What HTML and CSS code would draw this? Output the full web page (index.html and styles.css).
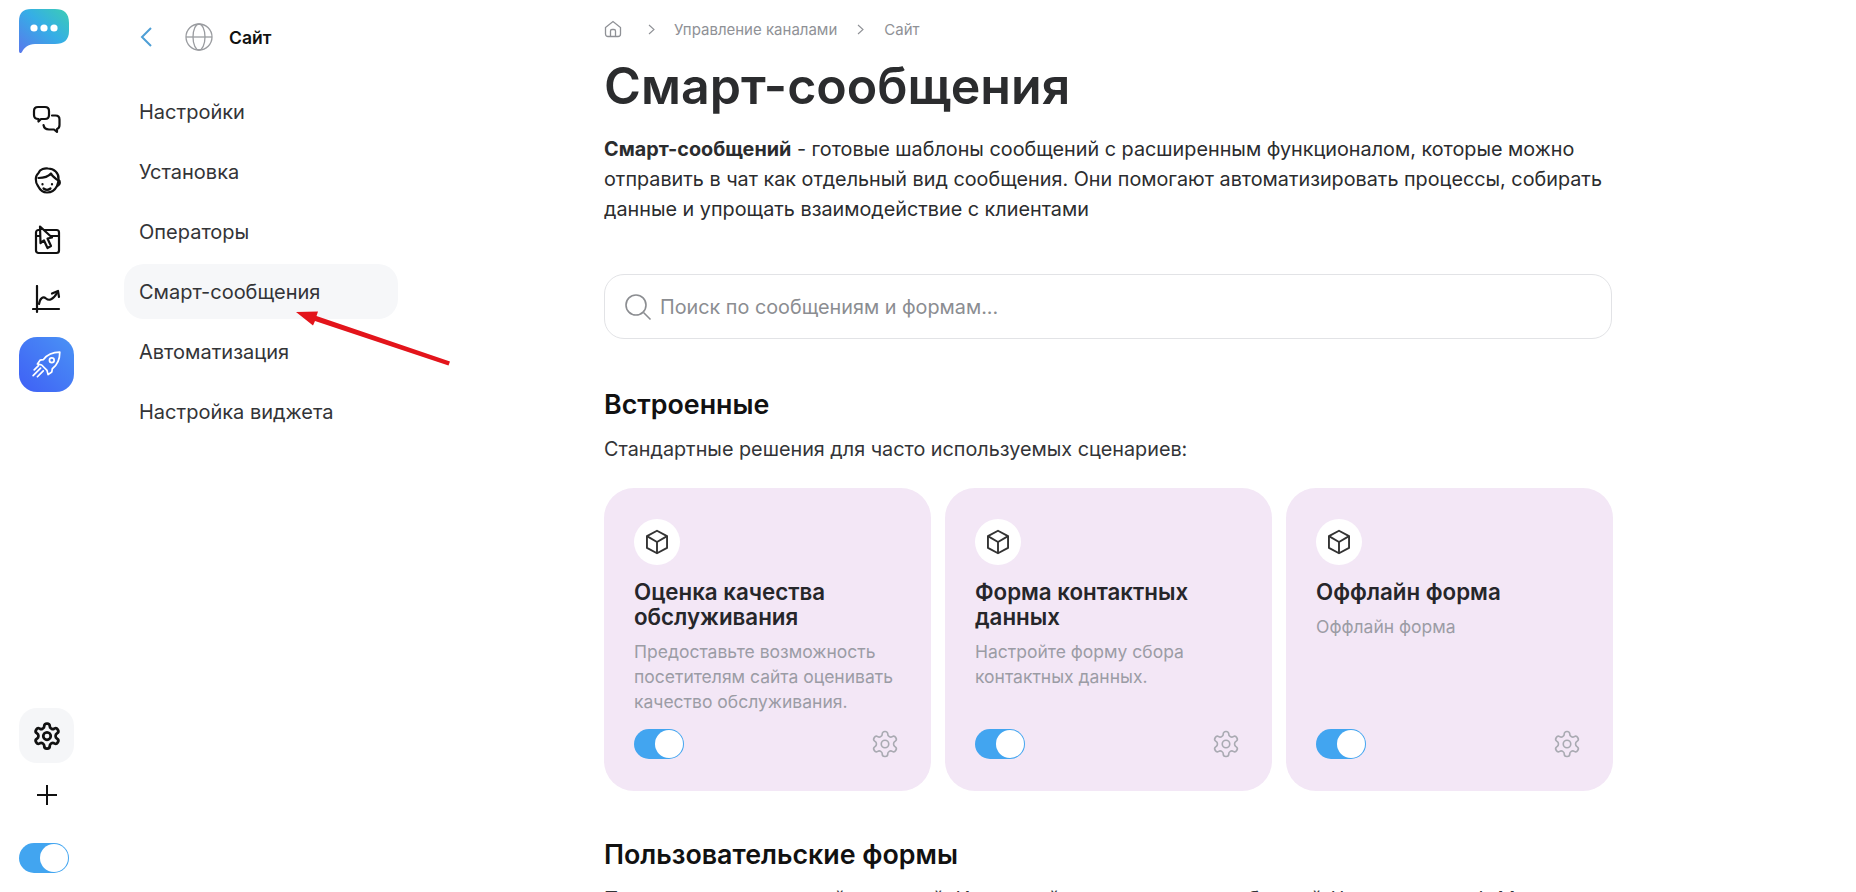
FILE: index.html
```html
<!DOCTYPE html>
<html lang="ru">
<head>
    <meta charset="UTF-8">
    <title>Смарт-сообщения</title>
    <link rel="stylesheet" href="styles.css">
</head>
<body>
    <div class="app">
        <!-- icon rail -->
        <aside class="rail">
            <svg class="logo" width="50" height="46" viewBox="0 0 50 46">
                <defs>
                    <linearGradient id="logoGrad" x1="0" y1="1" x2="1" y2="0">
                        <stop offset="0" stop-color="#5a78ec"/>
                        <stop offset="0.55" stop-color="#35aee6"/>
                        <stop offset="1" stop-color="#3ccdb4"/>
                    </linearGradient>
                </defs>
                <path d="M12 0H36C45 0 50 4 50 14V22C50 31 45 35 36 35H16C9 35 5 39 3 43C2 45 0 44 0 42V12C0 4 4 0 12 0Z" fill="url(#logoGrad)"/>
                <circle cx="15" cy="19" r="3.6" fill="#fff"/>
                <circle cx="25" cy="19" r="3.6" fill="#fff"/>
                <circle cx="35" cy="19" r="3.6" fill="#fff"/>
            </svg>
            <nav class="rail-icons">
                <div class="rail-item">
                    <svg width="30" height="30" viewBox="0 0 30 30" class="ico">
                        <path d="M6 2H13C15.500 2 17 3.500 17 6V10C17 12.500 15.500 14 13 14H9L6.500 16.500V14C3.500 14 2 12.500 2 10V6C2 3.500 3.500 2 6 2Z"/>
                        <path d="M20 10.500H23.500C26 10.500 27.500 12 27.500 14.500V20C27.500 22.500 26.500 23.500 25 24V27L22 24.500H17C14 24.500 12 23 11.500 20"/>
                    </svg>
                </div>
                <div class="rail-item">
                    <svg width="30" height="30" viewBox="0 0 30 30" class="ico">
                        <path d="M6 21C3 17 3 11 6.500 8C8 4 13 3 16 3.500C22 3.500 27 8 26.500 14C26.500 17 26 19 25 21C23 25 19 27.500 15 27.500C11 27.500 8 25 6 21Z"/>
                        <path d="M6.500 13C10 13 16 12 19 8.500C20 11 23 13 25.500 15"/>
                        <path d="M26.500 15C28.500 16 28.500 20 25.500 21"/>
                        <path d="M11.500 23.500C13.500 25 16.500 25 18.500 23.500"/>
                        <path d="M10.500 19V19.500M20 19V19.500"/>
                    </svg>
                </div>
                <div class="rail-item">
                    <svg width="30" height="30" viewBox="0 0 30 30" class="ico">
                        <rect x="4" y="5" width="23" height="23" rx="2.500"/>
                        <path d="M4 11H10M19 11H27"/>
                        <path d="M8 1.500L20 12.500L15.500 13.500L19 21L15.500 23L12 15.500L8.500 18Z" fill="#fff"/>
                    </svg>
                </div>
                <div class="rail-item">
                    <svg width="30" height="30" viewBox="0 0 30 30" class="ico">
                        <path d="M5 1V27M1 24H27"/>
                        <path d="M7 19C8 13 11 11 14 13.500C17 16 21 15 25 8"/>
                        <path d="M20 8.500L26 6L27 12"/>
                    </svg>
                </div>
                <div class="rail-item rail-active">
                    <svg width="32" height="32" viewBox="0 0 30 30" class="ico ico-white">
                        <path d="M27 3C20 3 15 5.500 11.500 10L8.500 10.500L6 14L10 15L15 20L16 24L19.500 21.500L20 18.500C24.500 15 27 10 27 3Z"/>
                        <circle cx="19.500" cy="10.500" r="2.200"/>
                        <path d="M9 18L2 25M11.500 20.500L6 26M7 15.500L3 19.500"/>
                    </svg>
                </div>
            </nav>
            <div class="rail-bottom">
                <div class="rail-item rail-settings">
                    <svg width="30" height="30" viewBox="0 0 24 24" class="ico">
                        <path d="M12.220 2h-.44a2 2 0 0 0-2 2v.18a2 2 0 0 1-1 1.730l-.43.25a2 2 0 0 1-2 0l-.15-.08a2 2 0 0 0-2.730.73l-.22.38a2 2 0 0 0 .73 2.730l.15.1a2 2 0 0 1 1 1.720v.51a2 2 0 0 1-1 1.740l-.15.09a2 2 0 0 0-.73 2.730l.22.38a2 2 0 0 0 2.730.73l.15-.08a2 2 0 0 1 2 0l.43.25a2 2 0 0 1 1 1.730V20a2 2 0 0 0 2 2h.44a2 2 0 0 0 2-2v-.18a2 2 0 0 1 1-1.730l.43-.25a2 2 0 0 1 2 0l.15.08a2 2 0 0 0 2.730-.73l.22-.39a2 2 0 0 0-.73-2.730l-.15-.08a2 2 0 0 1-1-1.740v-.5a2 2 0 0 1 1-1.740l.15-.09a2 2 0 0 0 .73-2.730l-.22-.38a2 2 0 0 0-2.730-.73l-.15.08a2 2 0 0 1-2 0l-.43-.25a2 2 0 0 1-1-1.730V4a2 2 0 0 0-2-2z"/>
                        <circle cx="12" cy="12" r="3"/>
                    </svg>
                </div>
                <svg class="plus" width="24" height="24" viewBox="0 0 24 24">
                    <path d="M12 2V22M2 12H22"/>
                </svg>
                <span class="toggle"><span class="knob"></span></span>
            </div>
        </aside>

        <!-- section menu -->
        <aside class="menu">
            <div class="menu-head">
                <svg class="back" width="14" height="22" viewBox="0 0 14 22">
                    <path d="M12 2L3 11L12 20"/>
                </svg>
                <svg class="globe" width="28" height="28" viewBox="0 0 28 28">
                    <circle cx="14" cy="14" r="13"/>
                    <ellipse cx="14" cy="14" rx="6" ry="13"/>
                    <path d="M1 14H27"/>
                </svg>
                <span class="menu-title">Сайт</span>
            </div>
            <ul class="menu-list">
                <li>Настройки</li>
                <li>Установка</li>
                <li>Операторы</li>
                <li class="menu-active">Смарт-сообщения</li>
                <li>Автоматизация</li>
                <li>Настройка виджета</li>
            </ul>
        </aside>

        <!-- content -->
        <main class="content">
            <div class="crumbs">
                <svg class="home" width="18" height="18" viewBox="0 0 18 18">
                    <path d="M1.500 7.500L9 1.500L16.500 7.500V14C16.500 15.500 15.500 16.500 14 16.500H4C2.500 16.500 1.500 15.500 1.500 14Z"/>
                    <path d="M6.500 16.500V11C6.500 10 7 9.500 8 9.500H10C11 9.500 11.500 10 11.500 11V16.500"/>
                </svg>
                <svg class="crumb-sep first" width="7" height="11" viewBox="0 0 7 11"><path d="M1 1L6 5.500L1 10"/></svg>
                <span>Управление каналами</span>
                <svg class="crumb-sep" width="7" height="11" viewBox="0 0 7 11"><path d="M1 1L6 5.500L1 10"/></svg>
                <span>Сайт</span>
            </div>
            <h1>Смарт-сообщения</h1>
            <p class="lead"><b>Смарт-сообщений</b> - готовые шаблоны сообщений с расширенным функционалом, которые можно отправить в чат как отдельный вид сообщения. Они помогают автоматизировать процессы, собирать данные и упрощать взаимодействие с клиентами</p>

            <div class="search">
                <svg width="28" height="28" viewBox="0 0 28 28">
                    <circle cx="12" cy="12" r="10"/>
                    <path d="M19.500 19.500L26.500 26.500"/>
                </svg>
                <span>Поиск по сообщениям и формам...</span>
            </div>

            <h2>Встроенные</h2>
            <p class="sub">Стандартные решения для часто используемых сценариев:</p>

            <div class="cards">
                <div class="card">
                    <span class="card-icon">
                        <svg width="26" height="26" viewBox="0 0 22 22">
                            <path d="M11 1.500L19.500 6V16L11 20.500L2.500 16V6Z"/>
                            <path d="M2.500 6L11 11L19.500 6M11 11V20.500"/>
                        </svg>
                    </span>
                    <h3>Оценка качества обслуживания</h3>
                    <p>Предоставьте возможность посетителям сайта оценивать качество обслуживания.</p>
                    <div class="card-foot">
                        <span class="toggle"><span class="knob"></span></span>
                        <svg class="gear" width="30" height="30" viewBox="0 0 24 24">
                            <path d="M12.220 2h-.44a2 2 0 0 0-2 2v.18a2 2 0 0 1-1 1.730l-.43.25a2 2 0 0 1-2 0l-.15-.08a2 2 0 0 0-2.730.73l-.22.38a2 2 0 0 0 .73 2.730l.15.1a2 2 0 0 1 1 1.720v.51a2 2 0 0 1-1 1.740l-.15.09a2 2 0 0 0-.73 2.730l.22.38a2 2 0 0 0 2.730.73l.15-.08a2 2 0 0 1 2 0l.43.25a2 2 0 0 1 1 1.730V20a2 2 0 0 0 2 2h.44a2 2 0 0 0 2-2v-.18a2 2 0 0 1 1-1.730l.43-.25a2 2 0 0 1 2 0l.15.08a2 2 0 0 0 2.730-.73l.22-.39a2 2 0 0 0-.73-2.730l-.15-.08a2 2 0 0 1-1-1.740v-.5a2 2 0 0 1 1-1.740l.15-.09a2 2 0 0 0 .73-2.730l-.22-.38a2 2 0 0 0-2.730-.73l-.15.08a2 2 0 0 1-2 0l-.43-.25a2 2 0 0 1-1-1.730V4a2 2 0 0 0-2-2z"/>
                            <circle cx="12" cy="12" r="3"/>
                        </svg>
                    </div>
                </div>
                <div class="card">
                    <span class="card-icon">
                        <svg width="26" height="26" viewBox="0 0 22 22">
                            <path d="M11 1.500L19.500 6V16L11 20.500L2.500 16V6Z"/>
                            <path d="M2.500 6L11 11L19.500 6M11 11V20.500"/>
                        </svg>
                    </span>
                    <h3>Форма контактных данных</h3>
                    <p>Настройте форму сбора контактных данных.</p>
                    <div class="card-foot">
                        <span class="toggle"><span class="knob"></span></span>
                        <svg class="gear" width="30" height="30" viewBox="0 0 24 24">
                            <path d="M12.220 2h-.44a2 2 0 0 0-2 2v.18a2 2 0 0 1-1 1.730l-.43.25a2 2 0 0 1-2 0l-.15-.08a2 2 0 0 0-2.730.73l-.22.38a2 2 0 0 0 .73 2.730l.15.1a2 2 0 0 1 1 1.720v.51a2 2 0 0 1-1 1.740l-.15.09a2 2 0 0 0-.73 2.730l.22.38a2 2 0 0 0 2.730.73l.15-.08a2 2 0 0 1 2 0l.43.25a2 2 0 0 1 1 1.730V20a2 2 0 0 0 2 2h.44a2 2 0 0 0 2-2v-.18a2 2 0 0 1 1-1.730l.43-.25a2 2 0 0 1 2 0l.15.08a2 2 0 0 0 2.730-.73l.22-.39a2 2 0 0 0-.73-2.730l-.15-.08a2 2 0 0 1-1-1.740v-.5a2 2 0 0 1 1-1.740l.15-.09a2 2 0 0 0 .73-2.730l-.22-.38a2 2 0 0 0-2.730-.73l-.15.08a2 2 0 0 1-2 0l-.43-.25a2 2 0 0 1-1-1.730V4a2 2 0 0 0-2-2z"/>
                            <circle cx="12" cy="12" r="3"/>
                        </svg>
                    </div>
                </div>
                <div class="card">
                    <span class="card-icon">
                        <svg width="26" height="26" viewBox="0 0 22 22">
                            <path d="M11 1.500L19.500 6V16L11 20.500L2.500 16V6Z"/>
                            <path d="M2.500 6L11 11L19.500 6M11 11V20.500"/>
                        </svg>
                    </span>
                    <h3>Оффлайн форма</h3>
                    <p>Оффлайн форма</p>
                    <div class="card-foot">
                        <span class="toggle"><span class="knob"></span></span>
                        <svg class="gear" width="30" height="30" viewBox="0 0 24 24">
                            <path d="M12.220 2h-.44a2 2 0 0 0-2 2v.18a2 2 0 0 1-1 1.730l-.43.25a2 2 0 0 1-2 0l-.15-.08a2 2 0 0 0-2.730.73l-.22.38a2 2 0 0 0 .73 2.730l.15.1a2 2 0 0 1 1 1.720v.51a2 2 0 0 1-1 1.740l-.15.09a2 2 0 0 0-.73 2.730l.22.38a2 2 0 0 0 2.730.73l.15-.08a2 2 0 0 1 2 0l.43.25a2 2 0 0 1 1 1.730V20a2 2 0 0 0 2 2h.44a2 2 0 0 0 2-2v-.18a2 2 0 0 1 1-1.730l.43-.25a2 2 0 0 1 2 0l.15.08a2 2 0 0 0 2.730-.73l.22-.39a2 2 0 0 0-.73-2.730l-.15-.08a2 2 0 0 1-1-1.740v-.5a2 2 0 0 1 1-1.740l.15-.09a2 2 0 0 0 .73-2.730l-.22-.38a2 2 0 0 0-2.730-.73l-.15.08a2 2 0 0 1-2 0l-.43-.25a2 2 0 0 1-1-1.730V4a2 2 0 0 0-2-2z"/>
                            <circle cx="12" cy="12" r="3"/>
                        </svg>
                    </div>
                </div>
            </div>

            <h2 class="forms-title">Пользовательские формы</h2>
            <p class="sub">Позволяют создать свой сценарий. Используйте конструктор сообщений (форм и кнопок). Можно</p>
        </main>
    </div>

    <!-- annotation arrow drawn on top of the screenshot -->
    <svg class="arrow" width="170" height="70" viewBox="0 0 170 70">
        <path d="M3 10L25 9.500L23.500 14L157 59.500L155.500 63.500L22 19L20 23.500Z"/>
    </svg>
</body>
</html>
```

FILE: styles.css
```css
html, body{
    margin: 0;
    height: 100%;
    overflow: hidden;
    background: #fff;
}
body{
    font-family: Inter, "Noto Sans", sans-serif;
    color: #2b2b2e;
    position: relative;
}
.app{
    display: flex;
    height: 892px;
}
.ico{
    fill: none;
    stroke: #111;
    stroke-width: 2.2;
    stroke-linecap: round;
    stroke-linejoin: round;
}
.ico-white{
    stroke: #fff;
    stroke-width: 1.6;
}

/* rail */
.rail{
    width: 74px;
    padding: 9px 0 0 19px;
    box-sizing: border-box;
    display: flex;
    flex-direction: column;
    flex-shrink: 0;
}
.logo{
    display: block;
}
.rail-icons{
    margin-top: 37px;
    display: flex;
    flex-direction: column;
    gap: 5px;
}
.rail-item{
    width: 55px;
    height: 55px;
    border-radius: 18px;
    display: flex;
    align-items: center;
    justify-content: center;
}
.rail-active{
    margin-top: 5px;
    background: linear-gradient(45deg, #3f5ff5, #4a93f5);
}
.rail-bottom{
    margin-top: auto;
    padding-bottom: 19px;
    display: flex;
    flex-direction: column;
    align-items: flex-start;
}
.rail-settings{
    background: #f5f6f8;
}
.plus{
    margin: 20px 0 0 16px;
    fill: none;
    stroke: #111;
    stroke-width: 2;
}
.rail-bottom .toggle{
    margin-top: 36px;
}
.toggle{
    display: flex;
    justify-content: flex-end;
    align-items: center;
    width: 50px;
    height: 30px;
    box-sizing: border-box;
    padding: 1px;
    border-radius: 15px;
    background: #42a5f0;
}
.knob{
    width: 28px;
    height: 28px;
    border-radius: 50%;
    background: #fff;
}

/* menu */
.menu{
    width: 530px;
    flex-shrink: 0;
    box-sizing: border-box;
    padding: 23px 0 0 50px;
}
.menu-head{
    display: flex;
    align-items: center;
    height: 28px;
}
.back{
    fill: none;
    stroke: #4e9fd6;
    stroke-width: 2;
    margin-left: 15px;
}
.globe{
    fill: none;
    stroke: #9a9ca0;
    stroke-width: 1.3;
    margin-left: 32px;
}
.menu-title{
    margin-left: 16px;
    font-size: 17.5px;
    font-weight: 600;
    color: #111;
}
.menu-list{
    list-style: none;
    margin: 33px 0 0 0;
    padding: 0;
    width: 274px;
    display: flex;
    flex-direction: column;
    gap: 5px;
}
.menu-list li{
    height: 55px;
    padding-left: 15px;
    display: flex;
    align-items: center;
    border-radius: 20px;
    font-size: 20px;
    color: #333437;
}
.menu-active{
    background: #f6f7f9;
}

/* content */
.content{
    width: 1008px;
    flex-shrink: 0;
    padding-top: 19px;
}
.crumbs{
    display: flex;
    align-items: center;
    height: 20px;
    font-size: 15px;
    color: #8f9196;
}
.home{
    fill: none;
    stroke: #8f9196;
    stroke-width: 1.3;
}
.crumb-sep{
    fill: none;
    stroke: #8f9196;
    stroke-width: 1.1;
    margin: 0 20px;
}
.crumb-sep.first{
    margin-left: 26px;
    margin-right: 19px;
}
h1{
    margin: 15px 0 0;
    font-size: 50.1px;
    line-height: 64px;
    font-weight: 600;
    color: #2b2c2e;
}
.lead{
    margin: 16px 0 0;
    font-size: 19.8px;
    line-height: 30px;
    color: #2b2c2e;
}
.lead b{
    font-weight: 700;
}
.search{
    margin-top: 50px;
    height: 65px;
    box-sizing: border-box;
    border: 1px solid #e2e3e6;
    border-radius: 20px;
    display: flex;
    align-items: center;
    padding-left: 19px;
    font-size: 19.8px;
    color: #8b8d91;
}
.search svg{
    fill: none;
    stroke: #8b8d91;
    stroke-width: 1.6;
    margin-right: 8px;
}
h2{
    margin: 49px 0 0;
    font-size: 26.8px;
    line-height: 32px;
    font-weight: 600;
    color: #111;
}
.sub{
    margin: 15px 0 0;
    font-size: 19.8px;
    line-height: 28px;
    color: #333437;
    white-space: nowrap;
}
.cards{
    margin-top: 25px;
    display: flex;
    gap: 14px;
}
.card{
    flex: 0 0 327px;
    height: 303px;
    box-sizing: border-box;
    padding: 31px 30px 0;
    border-radius: 30px;
    background: #f3e7f6;
    display: flex;
    flex-direction: column;
}
.card-icon{
    width: 46px;
    height: 46px;
    border-radius: 50%;
    background: #fff;
    display: flex;
    align-items: center;
    justify-content: center;
    flex-shrink: 0;
}
.card-icon svg{
    fill: none;
    stroke: #333;
    stroke-width: 1.6;
    stroke-linejoin: round;
}
.card h3{
    margin: 14px 0 0;
    font-size: 22.3px;
    line-height: 25px;
    font-weight: 600;
    color: #26262a;
}
.card p{
    margin: 10px 0 0;
    font-size: 17.5px;
    line-height: 25px;
    color: #9b9ca5;
}
.card-foot{
    margin-top: auto;
    margin-bottom: 32px;
    display: flex;
    justify-content: space-between;
    align-items: center;
}
.gear{
    fill: none;
    stroke: #a9aab2;
    stroke-width: 1.3;
    margin-right: 1px;
}
.forms-title{
    margin-top: 47px;
}

/* red annotation */
.arrow{
    position: absolute;
    left: 293px;
    top: 302px;
    fill: #e3141b;
}
```
